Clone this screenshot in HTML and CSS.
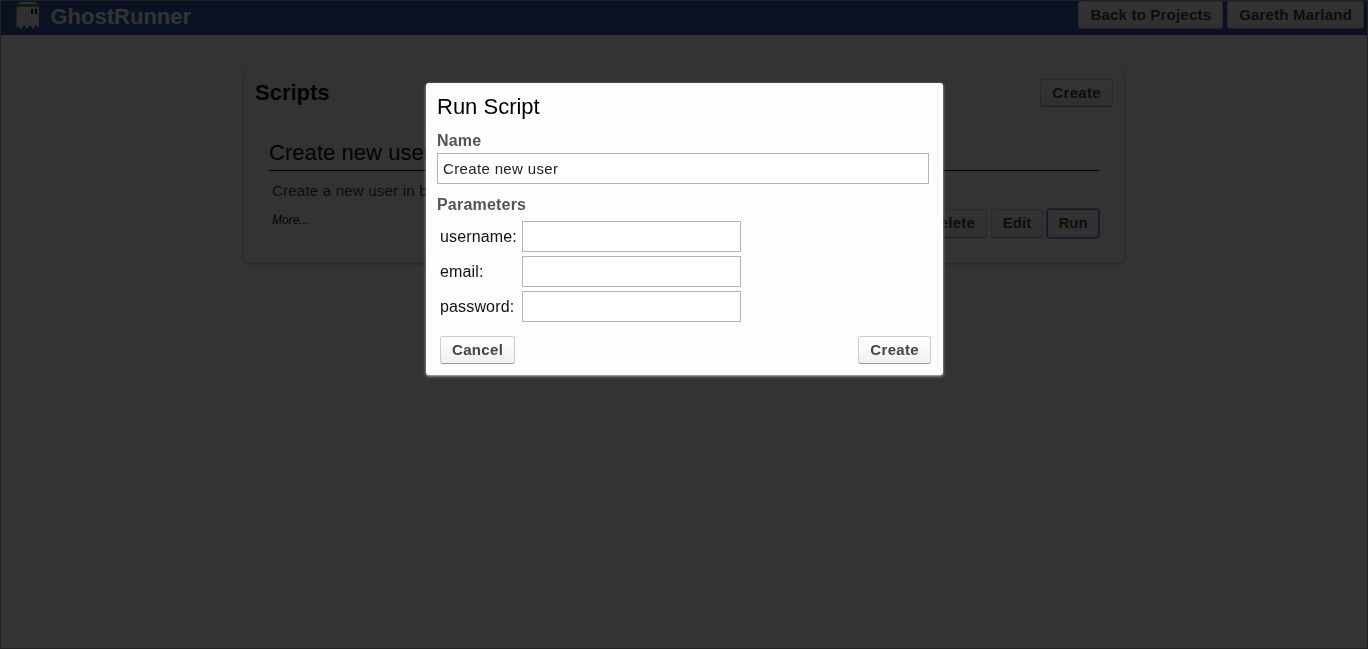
FILE: index.html
```html
<!DOCTYPE html>
<html lang="en">
<head>
<meta charset="utf-8">
<title>GhostRunner</title>
<link rel="stylesheet" href="styles.css">
</head>
<body>
<div class="page">
  <header class="topbar">
    <svg class="logo" width="24" height="30" viewBox="0 0 24 30">
      <path fill="#f0f0f0" d="M1.500 27V9Q2 1 7 1H19Q23.500 1 24 9V27L21 24L18 28L15 24L12 28L9 24L6 28L3.500 25Z"/>
      <path fill="#29a300" d="M2 6L3 3H22.500L23.500 6Q12 5.500 2 6Z"/>
      <path fill="#111" d="M16 8h2v5h-2zM20 8h2v5h-2z"/>
    </svg>
    <h1 class="brand">GhostRunner</h1>
    <nav class="nav">
      <button class="btn">Back to Projects</button>
      <button class="btn">Gareth Marland</button>
    </nav>
  </header>
  <main class="panel">
    <div class="panel-head">
      <h2 class="panel-title">Scripts</h2>
      <button class="btn btn-spaced">Create</button>
    </div>
    <section class="script">
      <h3 class="script-title">Create new user</h3>
      <p class="script-text">Create a new user in both</p>
      <div class="script-foot">
        <span class="more">More...</span>
        <div class="actions">
          <button class="btn">Delete</button>
          <button class="btn btn-short">Edit</button>
          <button class="btn btn-short btn-focus">Run</button>
        </div>
      </div>
    </section>
  </main>
</div>
<div class="overlay">
  <form class="dialog">
    <h2 class="dialog-title">Run Script</h2>
    <label class="label" for="name">Name</label>
    <input class="field field-wide" id="name" type="text" value="Create new user">
    <div class="label label-params">Parameters</div>
    <div class="params">
      <label for="username">username:</label><input class="field" id="username" type="text">
      <label for="email">email:</label><input class="field" id="email" type="text">
      <label for="password">password:</label><input class="field" id="password" type="text">
    </div>
    <div class="dialog-foot">
      <button class="btn btn-spaced" type="button">Cancel</button>
      <button class="btn btn-spaced" type="button">Create</button>
    </div>
  </form>
</div>
</body>
</html>
```
FILE: styles.css
```css
* { box-sizing: border-box; }
body {
  margin: 0;
  font-family: "Liberation Sans", Arial, sans-serif;
  font-size: 16px;
  color: #111;
  overflow: hidden;
}
h1, h2, h3, p { margin: 0; }
.page {
  height: 649px;
  border: 1px solid #a8a0a4;
  background: #fcfcfc;
}
.topbar {
  display: flex;
  align-items: flex-start;
  height: 34px;
  padding: 0 3px 0 14px;
  background: #345aa5;
}
.brand {
  margin-left: 11.5px;
  font-size: 22px;
  line-height: 31px;
  color: #fff;
}
.nav {
  display: flex;
  gap: 4px;
  margin-left: auto;
}
.btn {
  height: 28px;
  padding: 0 11px;
  border: 1px solid #ccc;
  border-bottom-color: #999;
  border-radius: 3px;
  background: linear-gradient(#fff, #f0f0f0);
  font: bold 15px/26px "Liberation Sans", Arial, sans-serif;
  letter-spacing: 0.2px;
  color: #444;
  white-space: nowrap;
}
.btn-spaced { letter-spacing: 0.33px; }
.panel {
  width: 880px;
  height: 194px;
  margin: 34px 0 0 243px;
  padding: 10px 11px;
  border-radius: 4px;
  box-shadow: 0 1px 3px rgba(0, 0, 0, 0.3);
}
.panel-head {
  display: flex;
  justify-content: space-between;
}
.panel-title {
  font-size: 22px;
  line-height: 28px;
}
.script {
  height: 127px;
  margin-top: 18px;
  padding: 10px 13px 0 13px;
  border: 1px solid #eee;
}
.script-title {
  height: 35px;
  border-bottom: 1px solid #111;
  font-size: 22px;
  font-weight: normal;
  line-height: 34px;
  letter-spacing: 0.05px;
}
.script-text {
  padding: 10px 3px 0;
  font-size: 15px;
  line-height: 20px;
  letter-spacing: 0.22px;
  color: #444;
}
.script-foot {
  display: flex;
  justify-content: space-between;
  padding: 8px 0 0 3px;
}
.more {
  font-size: 12px;
  font-style: italic;
  line-height: 22px;
}
.actions {
  display: flex;
  gap: 4px;
}
.actions .btn {
  height: 29px;
  padding-bottom: 1px;
}
.actions .btn-short {
  width: 52px;
  padding: 0 0 1px;
  letter-spacing: 0;
}
.btn-focus {
  border-color: #5b7fd0;
  box-shadow: 0 0 0 1px rgba(91, 127, 208, 0.7);
}
.overlay {
  position: fixed;
  inset: 0;
  background: rgba(0, 0, 0, 0.8);
}
.dialog {
  width: 517px;
  height: 292px;
  margin: 83px 0 0 426px;
  padding: 10px 12px 0 11px;
  border-radius: 3px;
  background: #fdfdfd;
  box-shadow: 0 1px 3px #ccc;
}
.dialog-title {
  font-size: 22px;
  font-weight: normal;
  line-height: 28px;
  color: #000;
}
.label {
  display: block;
  margin-top: 10px;
  font-weight: bold;
  line-height: 20px;
  letter-spacing: 0.2px;
  color: #555;
}
.field {
  display: block;
  width: 219px;
  height: 31px;
  padding: 1px 5px;
  border: 1px solid #b3b3b3;
  background: #fff;
  font: 15px "Liberation Sans", Arial, sans-serif;
  letter-spacing: 0.35px;
  color: #222;
}
.field-wide {
  width: 492px;
  margin-top: 2px;
}
.label-params { margin-top: 11px; }
.params {
  display: grid;
  grid-template-columns: 82px 219px;
  row-gap: 4px;
  align-items: center;
  margin: 6px 0 0 3px;
  letter-spacing: 0.15px;
}
.dialog-foot {
  display: flex;
  justify-content: space-between;
  margin: 14px 0 0 3px;
}
```
